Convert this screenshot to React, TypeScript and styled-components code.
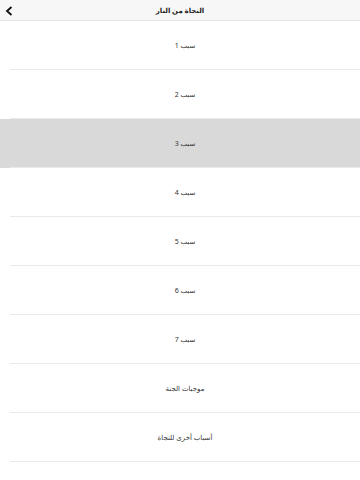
import React from 'react';
import styled, { createGlobalStyle } from 'styled-components';

const GlobalStyle = createGlobalStyle`
  html, body {
    margin: 0;
    padding: 0;
    background: #ffffff;
    font-family: "Noto Sans", "DejaVu Sans", sans-serif;
  }
`;

const Page = styled.div`
  width: 360px;
  min-height: 480px;
  background: #ffffff;
`;

const Header = styled.header`
  position: relative;
  height: 20px;
  display: flex;
  align-items: center;
  justify-content: center;
  background: #f7f7f7;
  border-bottom: 1px solid #e6e6e6;
`;

const BackButton = styled.button`
  position: absolute;
  left: 4px;
  top: 5px;
  width: 10px;
  height: 12px;
  padding: 0;
  border: none;
  background: transparent;
  display: flex;
  align-items: center;
  justify-content: center;
`;

const Title = styled.h1`
  margin: 0;
  font-size: 7px;
  font-weight: 700;
  color: #222;
`;

const List = styled.ul`
  list-style: none;
  margin: 0;
  padding: 0;
`;

const Row = styled.li<{ $active?: boolean }>`
  height: 49px;
  background: ${(p) => (p.$active ? '#d9d9d9' : '#ffffff')};
`;

const RowInner = styled.div`
  margin-left: 10px;
  height: 48px;
  display: flex;
  align-items: center;
  justify-content: center;
  border-bottom: 1px solid #e9e9e9;
  font-size: 7px;
  color: #333;
`;

const items = [
  'سبب 1',
  'سبب 2',
  'سبب 3',
  'سبب 4',
  'سبب 5',
  'سبب 6',
  'سبب 7',
  'موجبات الجنة',
  'أسباب أخرى للنجاة',
];

const App: React.FC = () => (
  <Page>
    <GlobalStyle />
    <Header>
      <BackButton aria-label="back">
        <svg width="8" height="10" viewBox="0 0 8 10">
          <path d="M6.5 1 L2 5 L6.5 9" fill="none" stroke="#111" strokeWidth="1.8" />
        </svg>
      </BackButton>
      <Title dir="rtl">النجاة من النار</Title>
    </Header>
    <List>
      {items.map((text, i) => (
        <Row key={text} $active={i === 2}>
          <RowInner dir="rtl">{text}</RowInner>
        </Row>
      ))}
    </List>
  </Page>
);

export default App;
